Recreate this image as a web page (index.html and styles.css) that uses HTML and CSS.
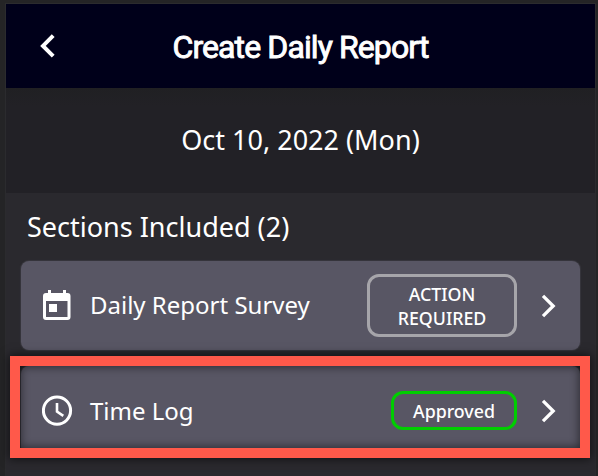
FILE: index.html
```html
<!DOCTYPE html>
<html lang="en">
<head>
<meta charset="utf-8">
<title>Create Daily Report</title>
<link rel="stylesheet" href="styles.css">
</head>
<body>
<div class="screen">
  <header class="header">
    <svg class="back" viewBox="0 0 16 24"><path d="M13.200 1.700 3 11.900l10.200 10.200"/></svg>
    <h1 class="title">Create Daily Report</h1>
  </header>
  <div class="date"><span class="date-text">Oct 10, 2022 (Mon)</span></div>
  <main class="sections">
    <h2 class="heading">Sections Included (2)</h2>
    <div class="card">
      <svg class="icon" viewBox="0 0 32 34"><path fill="#fff" fill-rule="evenodd" d="M6 1h3v3h12V1h3v3h1.500a3 3 0 0 1 3 3v21a3 3 0 0 1-3 3H4a3 3 0 0 1-3-3V7a3 3 0 0 1 3-3h2zM4 12v16h21.500V12zM7 15h8v8H7z"/></svg>
      <span class="label survey">Daily Report Survey</span>
      <span class="badge required">ACTION<br>REQUIRED</span>
      <svg class="chevron" viewBox="0 0 16 24"><path d="M2 1.800 12.200 12 2 22.200"/></svg>
    </div>
    <div class="card active">
      <svg class="icon" viewBox="0 0 32 34"><g fill="none" stroke="#fff" stroke-width="3"><circle cx="15" cy="16.600" r="13.600"/><path d="M15 9v8.600l6.300 4.200" stroke-width="2.600"/></g></svg>
      <span class="label">Time Log</span>
      <span class="badge approved">Approved</span>
      <svg class="chevron" viewBox="0 0 16 24"><path d="M2 1.800 12.200 12 2 22.200"/></svg>
      <div class="highlight"></div>
    </div>
  </main>
</div>
</body>
</html>
```
FILE: styles.css
```css
* { box-sizing: border-box; }
body {
  margin: 0;
  width: 598px;
  height: 476px;
  overflow: hidden;
  background: #242426;
  color: #fff;
  font-family: "Noto Sans", sans-serif;
}
.screen {
  height: 476px;
  margin: 3px 2px 0 5px;
  border: 1px solid #2b2b2e;
}
.header {
  height: 84px;
  display: grid;
  grid-template-columns: 80px 1fr 80px;
  align-items: center;
  background: #00001a;
}
.back {
  width: 16px;
  height: 24px;
  margin-left: 34px;
  fill: none;
  stroke: #fff;
  stroke-width: 4;
}
.title {
  margin: 2px 0 0;
  text-align: center;
  white-space: nowrap;
  font: 400 32px/40px Roboto, sans-serif;
  letter-spacing: -0.9px;
  -webkit-text-stroke: 0.9px #fff;
}
.date {
  height: 105px;
  padding-bottom: 2px;
  display: flex;
  align-items: center;
  justify-content: center;
  background: linear-gradient(#202023, #222126 18px);
  font-size: 27px;
}
.sections {
  height: 284px;
  padding: 15px 15px 0;
  background: #2a292e;
}
.heading {
  height: 37px;
  margin: 0 0 16px 6px;
  font-size: 27px;
  line-height: 37px;
  font-weight: 400;
}
.card {
  position: relative;
  height: 89px;
  padding: 0 23px 0 21px;
  display: flex;
  align-items: center;
  border-radius: 8px;
  background: #585664;
  box-shadow: 0 0 1px 1px #37363d;
}
.active { margin-top: 16px; }
.icon {
  width: 32px;
  height: 34px;
  flex: none;
}
.label {
  flex: 1;
  margin-left: 16px;
  font-size: 24px;
  white-space: nowrap;
}
.survey { padding-bottom: 2px; }
.badge {
  display: flex;
  align-items: center;
  justify-content: center;
  text-align: center;
  border: 3px solid #a6a5aa;
  border-radius: 12px;
  font-size: 17.800px;
  line-height: 24px;
  font-weight: 500;
}
.required { width: 150px; height: 63px; padding-top: 1px; }
.approved { width: 126px; height: 39px; padding-top: 1px; border-color: #00ce00; }
.chevron {
  width: 16px;
  height: 24px;
  margin-left: 24px;
  flex: none;
  fill: none;
  stroke: #fff;
  stroke-width: 3.300;
}
.highlight {
  position: absolute;
  inset: -10px -10px -3px -11px;
  border: 10px solid #ff594a;
  box-shadow: 0 0 9px 1px rgba(0, 0, 0, .6), inset 0 0 9px 1px rgba(0, 0, 0, .5);
}
```
